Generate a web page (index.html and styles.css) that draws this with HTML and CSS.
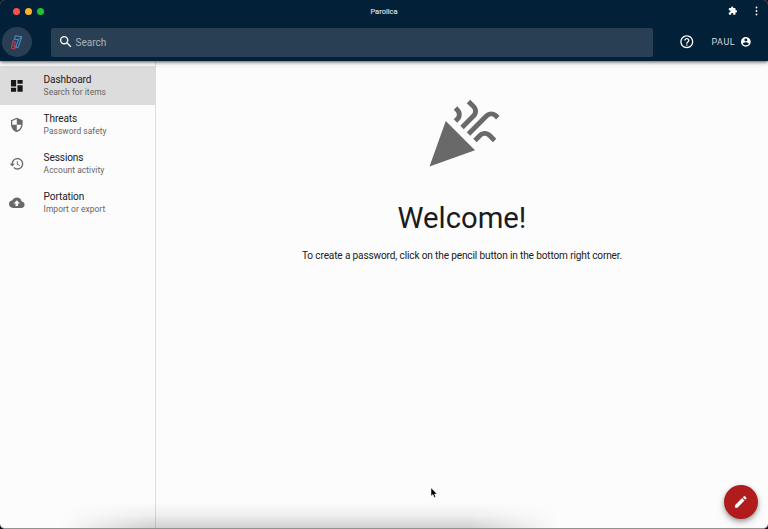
FILE: index.html
```html
<!DOCTYPE html>
<html lang="en">
<head>
<meta charset="utf-8">
<title>Parolica</title>
<link rel="stylesheet" href="styles.css">
</head>
<body>
<div class="window">
  <header class="header">
    <div class="titlebar">
      <div class="lights"><i class="red"></i><i class="yellow"></i><i class="green"></i></div>
      <div class="title">Parolica</div>
      <div class="window-actions">
        <svg class="puzzle" viewBox="0 0 24 24"><path d="M20.500 11H19V7c0-1.100-.9-2-2-2h-4V3.500a2.500 2.500 0 0 0-5 0V5H4c-1.100 0-1.990.9-1.990 2v3.800H3.500c1.490 0 2.700 1.210 2.700 2.700s-1.210 2.700-2.700 2.700H2V20c0 1.100.9 2 2 2h3.800v-1.500c0-1.490 1.210-2.700 2.700-2.700s2.700 1.210 2.700 2.700V22H17c1.100 0 2-.9 2-2v-4h1.500a2.500 2.500 0 0 0 0-5z"/></svg>
        <svg class="dots" viewBox="0 0 5 12"><circle cx="2.500" cy="2.500" r=".9"/><circle cx="2.500" cy="6" r=".9"/><circle cx="2.500" cy="9.500" r=".9"/></svg>
      </div>
    </div>
    <div class="toolbar">
      <div class="logo">
        <svg viewBox="0 0 20 20">
          <path class="logo-red" d="M7.300 6.800 5.700 9.500 4.300 16.200 7.600 17 9.300 14.500M6 10.500 8.300 9.700 7.300 16.500M5.300 13.500 8 14"/>
          <path class="logo-blue" d="M8.300 3.700 14.800 4.800 11 15.800 8.800 15 11.500 7.800 7.500 7.200zM11.500 7.800 14.800 4.800"/>
        </svg>
      </div>
      <div class="search">
        <svg class="icon" viewBox="0 0 24 24"><path d="M15.500 14h-.79l-.28-.27A6.471 6.471 0 0 0 16 9.500 6.500 6.500 0 1 0 9.500 16c1.610 0 3.090-.59 4.230-1.570l.27.28v.79l5 4.990L20.490 19l-4.990-5zm-6 0C7.010 14 5 11.990 5 9.500S7.010 5 9.500 5 14 7.010 14 9.500 11.990 14 9.500 14z"/></svg>
        <span>Search</span>
      </div>
      <svg class="icon help" viewBox="0 0 24 24"><path d="M11 18h2v-2h-2v2zm1-16C6.480 2 2 6.480 2 12s4.480 10 10 10 10-4.480 10-10S17.520 2 12 2zm0 18c-4.410 0-8-3.590-8-8s3.590-8 8-8 8 3.590 8 8-3.590 8-8 8zm0-14c-2.210 0-4 1.790-4 4h2c0-1.100.9-2 2-2s2 .9 2 2c0 2-3 1.750-3 5h2c0-2.250 3-2.500 3-5 0-2.210-1.790-4-4-4z"/></svg>
      <div class="user">
        <span>PAUL</span>
        <svg viewBox="0 0 24 24"><path d="M12 2C6.480 2 2 6.480 2 12s4.480 10 10 10 10-4.480 10-10S17.520 2 12 2zm0 3c1.660 0 3 1.340 3 3s-1.340 3-3 3-3-1.340-3-3 1.340-3 3-3zm0 14.200c-2.500 0-4.710-1.280-6-3.220.03-1.990 4-3.080 6-3.080 1.990 0 5.970 1.090 6 3.080-1.290 1.940-3.500 3.220-6 3.220z"/></svg>
      </div>
    </div>
  </header>
  <div class="body">
    <nav class="sidebar">
      <div class="item active">
        <svg class="icon" viewBox="0 0 24 24"><path d="M3 13h8V3H3v10zm0 8h8v-6H3v6zm10 0h8V11h-8v10zm0-18v6h8V3h-8z"/></svg>
        <div><div class="name">Dashboard</div><div class="hint">Search for items</div></div>
      </div>
      <div class="item">
        <svg class="icon" viewBox="0 0 24 24"><path d="M12 1 3 5v6c0 5.550 3.840 10.740 9 12 5.160-1.260 9-6.450 9-12V5l-9-4zm0 10.990h7c-.53 4.120-3.280 7.790-7 8.940V12H5V6.300l7-3.110v8.800z"/></svg>
        <div><div class="name">Threats</div><div class="hint">Password safety</div></div>
      </div>
      <div class="item">
        <svg class="icon" viewBox="0 0 24 24"><path d="M13 3c-4.970 0-9 4.030-9 9H1l3.890 3.890.07.14L9 12H6c0-3.870 3.130-7 7-7s7 3.130 7 7-3.130 7-7 7c-1.930 0-3.680-.79-4.940-2.060l-1.420 1.420A8.954 8.954 0 0 0 13 21c4.970 0 9-4.030 9-9s-4.030-9-9-9zm-1 5v5l4.280 2.540.72-1.210-3.500-2.080V8H12z"/></svg>
        <div><div class="name">Sessions</div><div class="hint">Account activity</div></div>
      </div>
      <div class="item">
        <svg class="icon" viewBox="0 0 24 24"><path d="M19.350 10.040A7.490 7.490 0 0 0 12 4C9.110 4 6.600 5.640 5.350 8.040A5.994 5.994 0 0 0 0 14c0 3.310 2.690 6 6 6h13c2.760 0 5-2.240 5-5 0-2.640-2.050-4.780-4.650-4.960zM14 13v4h-4v-4H7l5-5 5 5h-3z"/></svg>
        <div><div class="name">Portation</div><div class="hint">Import or export</div></div>
      </div>
    </nav>
    <main class="main">
      <svg class="party" viewBox="0 0 24 24"><path d="M2 22l14-5-9-9zm12.530-9.470 5.590-5.590c.49-.49 1.280-.49 1.770 0l.59.59 1.060-1.060-.59-.59c-1.070-1.070-2.820-1.070-3.890 0l-5.590 5.590 1.060 1.060zm-4.470-5.650-.59.59 1.060 1.060.59-.59c1.070-1.070 1.070-2.820 0-3.890l-.59-.59-1.060 1.070.59.59c.48.48.48 1.280 0 1.760zm7 5-1.590 1.590 1.060 1.060 1.590-1.590c.49-.49 1.280-.49 1.770 0l1.610 1.610 1.060-1.060-1.610-1.610c-1.080-1.070-2.820-1.070-3.890 0zm-2-6-3.590 3.590 1.060 1.060 3.590-3.590c1.070-1.070 1.070-2.820 0-3.890l-1.590-1.590-1.060 1.060 1.590 1.590c.48.49.48 1.290 0 1.770z"/></svg>
      <h1>Welcome!</h1>
      <p>To create a password, click on the pencil button in the bottom right corner.</p>
    </main>
  </div>
  <div class="shade"></div>
  <button class="fab" aria-label="Create"><svg class="icon" viewBox="0 0 24 24"><path d="M3 17.250V21h3.750L17.810 9.940l-3.750-3.750L3 17.250zM20.710 7.040a.996.996 0 0 0 0-1.410l-2.340-2.340a.996.996 0 0 0-1.410 0l-1.830 1.830 3.750 3.750 1.830-1.830z"/></svg></button>
  <svg class="cursor" viewBox="0 0 8 12"><path d="M1 .8v8.400l2-1.700 1.200 3 1.500-.6-1.200-2.900h2.600z" fill="#000" stroke="#fff" stroke-width=".5"/></svg>
</div>
</body>
</html>
```
FILE: styles.css
```css
* { box-sizing: border-box; }
body {
  margin: 0;
  background: linear-gradient(90deg, #05101d 50%, #3a0505 50%);
  font-family: Roboto, sans-serif;
  color: #212121;
}
svg { display: block; flex: none; fill: currentColor; }
.window {
  position: relative;
  display: flex;
  flex-direction: column;
  height: 529px;
  overflow: hidden;
  background: #fcfcfc;
  border-radius: 5px;
  border-bottom: 1px solid #929292;
}
.header {
  position: relative;
  z-index: 1;
  height: 61px;
  flex: none;
  background: #022138;
  color: #fff;
  box-shadow: 0 1px 3px rgba(0, 0, 0, .55), 0 2px 6px rgba(0, 0, 0, .16);
}
.titlebar {
  display: grid;
  grid-template-columns: 1fr auto 1fr;
  align-items: center;
  height: 22px;
  padding: 0 9px 0 13px;
}
.lights { display: flex; gap: 5px; }
.lights i { width: 7px; height: 7px; border-radius: 50%; }
.lights .red { background: #fc5148; }
.lights .yellow { background: #fdb42a; }
.lights .green { background: #22c137; }
.title {
  font-size: 7.400px;
  line-height: 9px;
  letter-spacing: .05px;
  color: #e0e6ea;
  -webkit-text-stroke: .1px #e0e6ea;
  margin: 0 4px 0 0;
}
.window-actions { display: flex; justify-content: flex-end; align-items: center; gap: 17px; }
.puzzle { width: 9.500px; height: 9.500px; }
.dots { width: 5px; height: 12px; }
.toolbar { display: flex; align-items: center; height: 40px; padding: 0 16.500px 0 2px; }
.icon { width: 15.600px; height: 15.600px; }
.logo {
  display: grid;
  place-items: center;
  width: 30px;
  height: 30px;
  border-radius: 50%;
  background: #293e52;
}
.logo svg { width: 20px; height: 20px; fill: none; stroke-width: 1; }
.logo-red { stroke: #b84452; }
.logo-blue { stroke: #4896d4; }
.search {
  display: flex;
  align-items: center;
  gap: 2.500px;
  width: 601.500px;
  height: 29px;
  margin-left: 19px;
  padding-left: 6.500px;
  border-radius: 2.500px;
  background: #293f53;
  font-size: 10.100px;
  letter-spacing: -.06px;
  color: #aab4bd;
}
.search .icon { color: #fff; }
.help { margin-left: 26px; }
.user {
  display: flex;
  align-items: center;
  gap: 4.500px;
  margin-left: auto;
  font-size: 8.900px;
  letter-spacing: .65px;
  color: #d5dbe0;
}
.user svg { width: 11.700px; height: 11.700px; color: #fff; }
.body { display: flex; flex: 1; }
.sidebar { width: 156px; padding-top: 5px; border-right: 1px solid #dcdcdc; }
.item {
  display: flex;
  align-items: center;
  gap: 19px;
  height: 39px;
  padding-left: 9px;
}
.item .icon { color: #686868; }
.item.active { background: #dcdcdc; }
.item.active .icon { color: #161616; }
.name { font-size: 10.100px; line-height: 12px; letter-spacing: -.12px; }
.hint { font-size: 8.450px; line-height: 12px; letter-spacing: .04px; color: #666; }
.main { display: flex; flex: 1; flex-direction: column; align-items: center; padding-top: 33.500px; }
.party { width: 78px; height: 78px; color: #696969; }
h1 { margin: 27.500px 0 0; font-size: 29.250px; font-weight: 400; line-height: 37px; color: #1b1b1b; }
p { margin: 11px 0 0; font-size: 10.100px; line-height: 16px; letter-spacing: -.15px; }
.shade {
  position: absolute;
  left: 60px;
  right: 210px;
  bottom: 0;
  height: 26px;
  background: linear-gradient(transparent, rgba(0, 0, 0, .05) 50%, rgba(0, 0, 0, .17));
  mask-image: linear-gradient(90deg, transparent, #000 18%, #000 82%, transparent);
}
.fab {
  position: absolute;
  right: 10px;
  bottom: 9px;
  display: grid;
  place-items: center;
  width: 34px;
  height: 34px;
  padding: 0;
  border: 0;
  border-radius: 50%;
  background: #b01b1b;
  color: #fff;
  box-shadow: 0 2px 4px rgba(0, 0, 0, .3), 0 4px 9px rgba(0, 0, 0, .16);
}
.cursor { position: absolute; left: 429.500px; top: 486.500px; width: 8px; height: 12px; }
```
